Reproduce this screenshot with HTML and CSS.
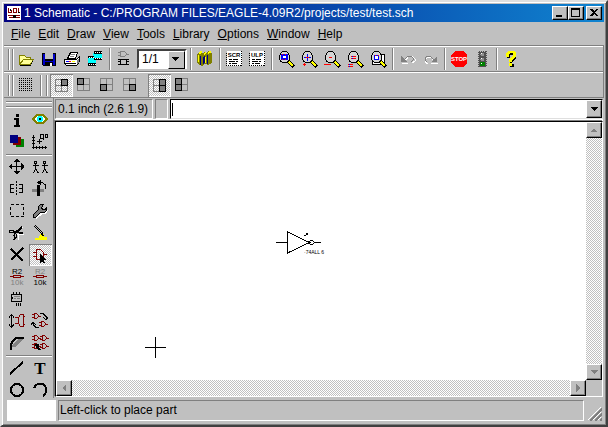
FILE: index.html
```
<!DOCTYPE html>
<html lang="en">
<head>
    <meta charset="UTF-8">
    <meta name="viewport" content="width=device-width, initial-scale=1.0">
    <title>Schematic</title>
    <link rel="stylesheet" href="styles.css">
</head>
<body>
    <svg class="defs" width="0" height="0" aria-hidden="true">
        <defs>
            <g id="lens">
                <path d="M12 12l6 6" stroke="#000" stroke-width="4"/>
                <path d="M13 13l4 4" stroke="#ff0" stroke-width="2"/>
                <path d="M6 2h5v1h1v1h1v2h1v5h-1v2h-1v1H6v-1H4v-2H3V6h1V4h1V3h1z"/>
                <path d="M6 3h5v1h1v2h1v5h-1v1h-1v1H6v-1H5v-1H4V6h1V4h1z" fill="#d4d4d4"/>
            </g>
            <g id="quad">
                <path d="M3.5 3.5h12v12h-12zM9.5 3.5v12M3.5 9.5h12" fill="none" stroke="#808080"/>
            </g>
            <g id="gate">
                <path d="M2.5.5h2l2 2v1l-2 2h-2zM0 1.5h2M0 4.5h2M7 3.5h2" fill="none" stroke="#800000"/>
            </g>
        </defs>
    </svg>

    <header class="titlebar">
        <svg class="app-icon" width="14" height="14" viewBox="0 0 14 14">
            <path fill="#fff" d="M0 0h14v14H0z"/>
            <path fill="none" stroke="#800000" d="M1.5 2v4.5h3V4M6.5 2.5h3v4h-3zM11.5 2v5M1 9.5h12M2 11.5h5M9 11.5h4"/>
            <path fill="#000" d="M3 3h1v2H3zM11 6h2v1h-2zM6 9h3v3H6z"/>
        </svg>
        <h1>1 Schematic - C:/PROGRAM FILES/EAGLE-4.09R2/projects/test/test.sch</h1>
        <div class="window-buttons">
            <button aria-label="Minimize"><svg width="12" height="10"><path d="M2 7h6v2H2z"/></svg></button>
            <button aria-label="Maximize"><svg width="12" height="10"><path fill-rule="evenodd" d="M1 0h9v9H1zM2 2v6h7V2z"/></svg></button>
            <button class="close" aria-label="Close"><svg width="12" height="10"><path d="M2 1h2l2 2 2-2h2L7 4.5 10 8H8L6 6 4 8H2l3-3.5z"/></svg></button>
        </div>
    </header>

    <nav class="menubar">
        <button><u>F</u>ile</button>
        <button><u>E</u>dit</button>
        <button><u>D</u>raw</button>
        <button><u>V</u>iew</button>
        <button><u>T</u>ools</button>
        <button><u>L</u>ibrary</button>
        <button><u>O</u>ptions</button>
        <button><u>W</u>indow</button>
        <button><u>H</u>elp</button>
    </nav>

    <div class="toolbar">
        <span class="handle"></span>
        <button class="tool" aria-label="Open"><svg viewBox="0 0 21 21">
            <path fill="#ff9" stroke="#808000" d="M3.5 15.5v-9h5l2 2h4v7z"/>
            <path fill="#ff9" stroke="#808000" d="M3.5 15.5l4-5h10l-3 5z"/>
            <path fill="none" stroke="#000" d="M4 16.5h11M15.5 15v-1M16.5 13v-1"/>
        </svg></button>
        <button class="tool" aria-label="Save"><svg viewBox="0 0 21 21">
            <path d="M3 4h14v13H4l-1-1z"/>
            <path fill="#0000c8" d="M4 5h2v7h8V5h2v11h-2v-3H6v3H4z"/>
            <path fill="#c0c0c0" d="M6 4h8v6H6z"/>
            <path fill="#fff" d="M11 14h2v3h-2z"/>
        </svg></button>
        <button class="tool" aria-label="Print"><svg viewBox="0 0 21 21">
            <path fill="#fff" stroke="#000" d="M5.5 9.5l3-6h7l-2 6z"/>
            <path stroke="#808080" d="M8 5.5h5M8 7.5h4"/>
            <path fill="#fff" stroke="#000" d="M2.5 10.5h12l3-3v5l-3 4h-10l-2-2z"/>
            <path fill="#808080" d="M15 11l2-2v4l-2 2z"/>
            <path stroke="#000" d="M3 14.5h11"/>
            <path fill="#00f" d="M4 12h3v1H4z"/><path fill="#f00" d="M7 12h2v1H7z"/><path fill="#ff0" d="M10 12h3v1h-3z"/>
        </svg></button>
        <button class="tool" aria-label="Board"><svg viewBox="0 0 21 21">
            <path fill="#0ff" d="M8 4h9v7h-6v4H3V8h5z"/>
            <path d="M9 2h8v3H9zM9 9h8v2H9zM3 7h6v2H3zM3 14h8v3H3z"/>
            <path stroke="#fff" stroke-dasharray="1 1" d="M10 3.5h7M10 9.5h7M4 8.5h5M4 15.5h7"/>
        </svg></button>
        <span class="separator"></span>
        <button class="tool" aria-label="Use library"><svg viewBox="0 0 21 21">
            <path fill="none" stroke="#808080" d="M6.5 2.5h4l2 2v1l-2 2h-4zM4 3.5h2M4 6.5h2M13 5.5h2"/>
            <path fill="none" stroke="#000" d="M6.5 10.5h6v5h-6zM4 10.5h2M4 12.5h2M4 15.5h2M13 10.5h2M13 12.5h2M13 15.5h2"/>
        </svg></button>
        <span class="sheet"><select aria-label="Sheet"><option>1/1</option></select></span>
        <span class="separator"></span>
        <button class="tool" aria-label="Libraries"><svg viewBox="0 0 21 21">
            <path fill="#808000" d="M2 5l4-2 2 1 2-1 1 1 3-2 3 2v10l-4 2-3-1-3 2-3-1-2-2z"/>
            <path fill="#ff0" d="M3 4l3-2 2 1-3 2zM8 5l3-2v2L9 6zM12 4l3-2 2 1-4 2z"/>
            <path fill="none" stroke="#000080" d="M5.5 7v9M8.5 8v7M9.5 7v7M12.5 6v9"/>
            <path fill="none" stroke="#ff0" d="M3.5 6v7M10.5 8v6"/>
        </svg></button>
        <span class="separator"></span>
        <button class="tool" aria-label="Run script"><svg viewBox="0 0 21 21">
            <path fill="#fff" stroke="#000" stroke-dasharray="1 1" d="M2.5 2.5h15v14h-15z"/>
            <path fill="#fff" d="M3 2h14v7H3z"/>
            <text x="10" y="8" font-size="6" text-anchor="middle">SCR</text>
            <path stroke="#000" d="M5 10.5h3M9 10.5h5M5 12.5h6M12 12.5h2M5 14.5h2M8 14.5h5"/>
        </svg></button>
        <button class="tool" aria-label="Run ULP"><svg viewBox="0 0 21 21">
            <path fill="#fff" stroke="#000" stroke-dasharray="1 1" d="M2.5 2.5h15v14h-15z"/>
            <path fill="#fff" d="M3 2h14v7H3z"/>
            <text x="10" y="8" font-size="6" text-anchor="middle">ULP</text>
            <path stroke="#000" d="M5 10.5h3M9 10.5h5M5 12.5h6M12 12.5h2M5 14.5h2M8 14.5h5"/>
        </svg></button>
        <span class="separator"></span>
        <button class="tool" aria-label="Zoom to fit"><svg viewBox="0 0 21 21">
            <use href="#lens"/>
            <path fill="#fff" stroke="#00f" stroke-width="2" d="M6 6h5v4H6z"/><path stroke="#f00" stroke-dasharray="1 2" d="M6 5.5h6M6 10.5h6"/>
        </svg></button>
        <button class="tool" aria-label="Zoom in"><svg viewBox="0 0 21 21">
            <use href="#lens"/>
            <path stroke="#00f" d="M5 8.5h7M8.5 5v7"/><path stroke="#f00" d="M7 8.5h3M4 15.5h3M5.5 14v3"/>
        </svg></button>
        <button class="tool" aria-label="Zoom out"><svg viewBox="0 0 21 21">
            <use href="#lens"/>
            <path stroke="#f00" d="M7 8.5h3M2 15.5h7"/>
        </svg></button>
        <button class="tool" aria-label="Redraw"><svg viewBox="0 0 21 21">
            <use href="#lens"/>
            <path stroke="#f00" d="M6 7.5h5M6 9.5h5M3 15.5h5M3 17.5h5"/><path stroke="#00f" stroke-dasharray="1 3" d="M7 7.5h4M7 9.5h4M4 15.5h4M4 17.5h4"/>
        </svg></button>
        <button class="tool" aria-label="Zoom select"><svg viewBox="0 0 21 21">
            <path fill="#fff" stroke="#000" d="M4.5 5.5h12v10h-12z"/>
            <use href="#lens"/>
            <path fill="#fff" stroke="#00f" d="M6.5 6.5h4v4h-4z"/><path stroke="#f00" stroke-dasharray="1 2" d="M7 6.5h4"/>
        </svg></button>
        <span class="separator"></span>
        <button class="tool" aria-label="Undo"><svg viewBox="0 0 21 21">
            <path fill="none" stroke="#fff" d="M7 13l5-6h3l3 3v2l-3 2M5 14.5h6"/>
            <path fill="none" stroke="#808080" d="M6 12l5-5h3l2 2v2l-2 2"/><path fill="#808080" d="M4 7v6h6z"/>
        </svg></button>
        <button class="tool" aria-label="Redo"><svg viewBox="0 0 21 21">
            <path fill="none" stroke="#fff" d="M15 13l-4-5H8l-3 3v2l3 2M11 14.5h7"/>
            <path fill="none" stroke="#808080" d="M15 12l-5-5H7L5 9v2l2 2"/><path fill="#808080" d="M17 7v6h-6z"/>
        </svg></button>
        <span class="separator"></span>
        <button class="tool" aria-label="Stop"><svg viewBox="0 0 21 21">
            <path fill="#f00" d="M7 2h7l4 4v8l-4 4H7l-5-4V6z"/>
            <text class="stop" x="10" y="12" font-size="6" text-anchor="middle">STOP</text>
        </svg></button>
        <button class="tool" aria-label="Go"><svg viewBox="0 0 21 21">
            <path fill="#505050" d="M6 2h9v16H6z"/>
            <path stroke="#c0c0c0" stroke-dasharray="1 1" d="M6.5 2v16M14.5 3v15M8 2.5h6"/>
            <circle cx="10.5" cy="5.5" r="2" fill="#909090"/><circle cx="10.5" cy="10.5" r="2" fill="#909090"/>
            <circle cx="10.5" cy="15" r="2.5" fill="#008000"/><path fill="#fff" d="M9 4h1v1H9zM9 9h1v1H9zM9 14h1v1H9z"/>
        </svg></button>
        <span class="separator"></span>
        <button class="tool" aria-label="Help"><svg viewBox="0 0 21 21">
            <path d="M7 4h8v5l-4 4v1H9v-2h1l3-3V6H9v3H6V6zM9 15h4v3H9z"/>
            <path fill="#ff0" d="M7 2h6l2 2v4l-4 3v2H8v-3l4-3V5l-1-1H9L8 5v3H5V4zM8 14h3v3H8z"/>
        </svg></button>
    </div>

    <div class="toolbar">
        <span class="handle"></span>
        <button class="tool" aria-label="Grid"><svg viewBox="0 0 21 21">
            <path stroke="#000" stroke-dasharray="1 1" d="M3 3.5h13M3 5.5h13M3 7.5h13M3 9.5h13M3 11.5h13M3 13.5h13M3 15.5h13"/>
        </svg></button>
        <span class="handle handle-wide"></span>
        <button class="tool active" aria-label="Top right" aria-pressed="true"><svg viewBox="0 0 21 21">
            <use href="#quad"/><path fill="#808080" stroke="#000" d="M9.5 3.5h6v6h-6z"/>
        </svg></button>
        <button class="tool" aria-label="Top left"><svg viewBox="0 0 21 21">
            <use href="#quad"/><path fill="#808080" stroke="#000" d="M3.5 3.5h6v6h-6z"/>
        </svg></button>
        <button class="tool" aria-label="Bottom left"><svg viewBox="0 0 21 21">
            <use href="#quad"/><path fill="#808080" stroke="#000" d="M3.5 9.5h6v6h-6z"/>
        </svg></button>
        <button class="tool" aria-label="Bottom right"><svg viewBox="0 0 21 21">
            <use href="#quad"/><path fill="#808080" stroke="#000" d="M9.5 9.5h6v6h-6z"/>
        </svg></button>
        <span class="separator blank"></span>
        <button class="tool active" aria-label="Right side" aria-pressed="true"><svg viewBox="0 0 21 21">
            <use href="#quad"/><path fill="#808080" stroke="#000" d="M9.5 3.5h6v12h-6zM9 9.5h7"/>
        </svg></button>
        <button class="tool" aria-label="Left side"><svg viewBox="0 0 21 21">
            <use href="#quad"/><path fill="#808080" stroke="#000" d="M3.5 3.5h6v12h-6zM3 9.5h7"/>
        </svg></button>
    </div>

    <main class="workspace">
        <aside class="palette">
            <span class="grip"></span>
            <div class="tools">
                <button class="tool" aria-label="Info"><svg viewBox="0 0 21 21">
                    <path d="M9 4h3v3H9zM7 8h5v7h1v2H7v-2h2v-5H7z"/>
                </svg></button>
                <button class="tool" aria-label="Show"><svg viewBox="0 0 21 21">
                    <path fill="#fff" stroke="#808000" stroke-width="2" d="M3 9l4-4h6l4 4-4 4H7z"/>
                    <circle cx="10" cy="9" r="3" fill="#0ff"/><path d="M9 8h2v2H9z"/>
                </svg></button>
                <button class="tool" aria-label="Display"><svg viewBox="0 0 21 21">
                    <path fill="#008000" d="M9 7h8v8H9z"/><path fill="#800000" d="M6 5h8v8H6z"/><path fill="#000080" d="M3 3h8v8H3z"/>
                </svg></button>
                <button class="tool" aria-label="Mark"><svg viewBox="0 0 21 21">
                    <path fill="none" stroke="#000" d="M3.5 3v13.5M2 15.5h15M2 5.5h3M2 8.5h3M2 11.5h3M6.5 14v3M9.5 14v3M12.5 14v3M15.5 14v3M7 9.5h5M9.5 7v5M10.5 3v3h3M10 2.5h3v5M15 2.5h2v3h-2z"/>
                </svg></button>
            </div>
            <hr>
            <div class="tools">
                <button class="tool" aria-label="Move"><svg viewBox="0 0 21 21">
                    <path d="M9 2h1l3 3H6zM9 17h1l3-3H6zM2 9v1l3 3V6zM17 9v1l-3 3V6z"/><path stroke="#000" d="M9.5 4v12M4 9.5h12"/>
                </svg></button>
                <button class="tool" aria-label="Copy"><svg viewBox="0 0 21 21">
                    <path id="man" fill="none" stroke="#000" d="M4.5 4.5h2v2h-2zM3 8.5h6M5.5 7v5M5.5 12l-2 4M5.5 12l3 4"/>
                    <use href="#man" x="9"/>
                </svg></button>
                <button class="tool" aria-label="Mirror"><svg viewBox="0 0 21 21">
                    <path fill="none" stroke="#000" d="M7 5.5H3.5v8H7M4 9.5h3M12 5.5h3.5v8H12M12 9.5h4"/>
                    <path stroke="#000" stroke-dasharray="2 1" d="M9.5 2v15"/>
                </svg></button>
                <button class="tool" aria-label="Rotate"><svg viewBox="0 0 21 21">
                    <path fill="#808080" d="M2 10h12v3H2z"/><path d="M7 6h3v11H7z"/>
                    <path fill="none" stroke="#000" d="M9 3.5h3l3 2 1 4"/><path d="M7 3.5l4-3v6z"/>
                </svg></button>
                <button class="tool" aria-label="Group"><svg viewBox="0 0 21 21">
                    <path fill="none" stroke="#000" stroke-dasharray="3 2" d="M3.5 3.5h13v12h-13z"/>
                </svg></button>
                <button class="tool" aria-label="Change"><svg viewBox="0 0 21 21">
                    <path stroke="#fff" stroke-width="2" fill="none" d="M6 17l6-5h3l2-3"/>
                    <path fill="#808080" stroke="#000" d="M3.5 13.5l5-5v-3l2-2h3l-2 3 1 2h3l1-2v3l-2 2h-4l-5 5h-2z"/>
                </svg></button>
                <button class="tool" aria-label="Cut"><svg viewBox="0 0 21 21">
                    <path fill="none" stroke="#fff" d="M9 11.5h8M11.5 12v5M10 8l6-4"/>
                    <path fill="none" stroke="#000" stroke-width="2" d="M7 11l8-7M7 9l9 1"/>
                    <path fill="none" stroke="#000" d="M2.5 7.5h4v2h-4zM5.5 12.5h2v4h-2M9.5 11v3l-2 2"/>
                </svg></button>
                <button class="tool" aria-label="Paste"><svg viewBox="0 0 21 21">
                    <path stroke="#000" stroke-width="2" d="M5 3l8 8"/><path stroke="#c0c0c0" d="M5 3l7 7"/>
                    <path fill="#ff0" d="M10 11h4v3h3v3H5v-2h4z"/><path d="M11 10h2l1 3h-2z"/>
                </svg></button>
                <button class="tool" aria-label="Delete"><svg viewBox="0 0 21 21">
                    <path stroke="#000" stroke-width="2" d="M4 4l12 12M16 3L4 15"/>
                </svg></button>
                <button class="tool active" aria-label="Add" aria-pressed="true"><svg viewBox="0 0 21 21">
                    <path fill="none" stroke="#800000" d="M6.5 4.5h4l3 3v4l-3 3h-4zM3 7.5h3M3 11.5h3M13 9.5h4"/>
                    <path d="M10 9l6 6h-2l1 3h-2l-1-2-2 2z"/>
                </svg></button>
                <button class="tool" aria-label="Name"><svg viewBox="0 0 21 21">
                    <text class="light" x="10" y="7" font-size="8" text-anchor="middle">R2</text>
                    <text class="light dim" x="10" y="18" font-size="8" text-anchor="middle">10k</text>
                    <path fill="none" stroke="#800000" d="M6.5 8.5h7v2h-7zM3 9.5h3M14 9.5h3"/>
                </svg></button>
                <button class="tool" aria-label="Value"><svg viewBox="0 0 21 21">
                    <text class="light dim" x="10" y="7" font-size="8" text-anchor="middle">R2</text>
                    <text class="light" x="10" y="18" font-size="8" text-anchor="middle">10k</text>
                    <path fill="none" stroke="#800000" d="M6.5 8.5h7v2h-7zM3 9.5h3M14 9.5h3"/>
                </svg></button>
                <button class="tool" aria-label="Smash"><svg viewBox="0 0 21 21">
                    <path fill="none" stroke="#000" d="M4.5 5.5h10v7h-10v-3h1v-1h-1zM6.5 3v2M9.5 3v2M12.5 3v2M9.5 14v3M11.5 14v3M13.5 14v3"/>
                    <path fill="none" stroke="#808080" d="M7 7.5h6M7 9.5h2M10 9.5h3"/>
                </svg></button>
            </div>
            <div class="tools">
                <button class="tool" aria-label="Pinswap"><svg viewBox="0 0 21 21">
                    <path fill="none" stroke="#000" d="M4.5 4v12M2 6.5l2.5-3L7 6.5M2 13.5l2.5 3 2.5-3"/>
                    <path fill="none" stroke="#800000" d="M16.5 3.5h-3l-2 3v6l2 3h3zM8 6.5h3M8 12.5h3M17 5.5h1M17 13.5h1"/>
                </svg></button>
                <button class="tool" aria-label="Gateswap"><svg viewBox="0 0 21 21">
                    <use href="#gate" x="2" y="2"/><use href="#gate" x="9" y="10"/>
                    <path fill="none" stroke="#000" d="M10 2.5h3l3 3v3M13 6.5l3 2 2-2M3.5 12v2l2 2h3M1 13.5l2-2 3 2"/>
                </svg></button>
                <button class="tool" aria-label="Split"><svg viewBox="0 0 21 21">
                    <path fill="#808080" d="M5 14v-2l8-7h3v2l-8 7z"/>
                    <path d="M3 17v-6l3-5 2-2h9v2H9l-2 2-2 4v5z"/>
                </svg></button>
                <button class="tool" aria-label="Invoke"><svg viewBox="0 0 21 21">
                    <use href="#gate" x="2" y="2"/><use href="#gate" x="10" y="2"/><use href="#gate" x="2" y="10"/><use href="#gate" x="10" y="10"/>
                    <path d="M5 11h4v3l2 3H9l-3-2z"/>
                </svg></button>
            </div>
            <hr>
            <div class="tools">
                <button class="tool" aria-label="Wire"><svg viewBox="0 0 21 21"><path stroke="#000" stroke-width="2" d="M3 16L16 4"/></svg></button>
                <button class="tool" aria-label="Text"><svg viewBox="0 0 21 21"><text class="serif" x="10" y="16" font-size="17" text-anchor="middle">T</text></svg></button>
                <button class="tool" aria-label="Circle"><svg viewBox="0 0 21 21"><circle cx="10" cy="10" r="6" fill="none" stroke="#000" stroke-width="2"/></svg></button>
                <button class="tool" aria-label="Arc"><svg viewBox="0 0 21 21"><path fill="none" stroke="#000" stroke-width="2" d="M4 8c2-5 8-6 11-2s1 8-2 10"/></svg></button>
            </div>
        </aside>

        <section class="editor">
            <div class="command-row">
                <output class="coords">0.1 inch (2.6 1.9)</output>
                <span class="flag"></span>
                <div class="command">
                    <input type="text" aria-label="Command">
                    <button class="arrow" aria-label="History"><svg width="7" height="4"><path d="M0 0h7L4 4H3z"/></svg></button>
                </div>
            </div>
            <div class="view">
                <svg class="sheet-canvas">
                    <path fill="none" stroke="#000" d="M89 225.5h21M99.5 215v21"/>
                    <path fill="none" stroke="#000" d="M220 120.5h11M231.5 110v21l22-10.5zM258 120.5h7"/>
                    <path d="M254 118h3v1h1v1h-1v-1h-3zM253 119h1v3h-1zM254 122h3v1h-3zM257 121h1v1h-1z"/>
                    <path d="M250 111h2v2h-2zM248 113h2v1h-2z"/>
                    <text x="248" y="132" font-size="5">·74ALL 6</text>
                </svg>
                <div class="scroll vertical">
                    <button class="arrow" aria-label="Scroll up"><svg width="8" height="4"><path d="M4 0L0 4h7z"/></svg></button>
                    <button class="arrow" aria-label="Scroll down"><svg width="8" height="4"><path d="M0 0h8L4 4z"/></svg></button>
                </div>
                <div class="scroll horizontal">
                    <button class="arrow" aria-label="Scroll left"><svg width="4" height="8"><path d="M4 0v8L0 4z"/></svg></button>
                    <button class="arrow" aria-label="Scroll right"><svg width="4" height="8"><path d="M0 0v8l4-4z"/></svg></button>
                </div>
            </div>
        </section>
    </main>

    <footer class="statusbar">
        <span class="status-swatch"></span>
        <span class="status-text">Left-click to place part</span>
        <svg class="size-grip" width="14" height="14" viewBox="0 0 14 14">
            <path stroke="#fff" d="M0 13L13 0M5 13l8-8M10 13l3-3"/>
            <path stroke="#808080" stroke-width="2" d="M2 14L14 2M7 14l7-7M12 14l2-2"/>
        </svg>
    </footer>
</body>
</html>
```
FILE: styles.css
```
* {
    box-sizing: border-box;
}
body {
    display: flex;
    flex-direction: column;
    height: 100vh;
    margin: 0;
    padding: 2px;
    overflow: hidden;
    background: #c0c0c0;
    border: 2px solid;
    border-color: #dfdfdf #404040 #404040 #dfdfdf;
    box-shadow: inset 1px 1px #fff, inset -1px -1px #808080;
    font: 12px/16px "Liberation Sans", Arial, sans-serif;
    color: #000;
}
button, input, select {
    margin: 0;
    padding: 0;
    border: 0;
    border-radius: 0;
    background: none;
    font: inherit;
    color: inherit;
}
svg {
    display: block;
    flex: none;
    shape-rendering: crispEdges;
}
svg text {
    font-family: "Liberation Sans", sans-serif;
    font-weight: bold;
}
svg .serif {
    font-family: "Liberation Serif", serif;
}
svg .light {
    font-weight: normal;
}
svg .dim {
    fill: #808080;
}
svg .stop {
    fill: #fff;
}
.defs {
    position: absolute;
}

/* title and menu */
.titlebar {
    display: flex;
    align-items: center;
    flex: none;
    height: 18px;
    padding: 0 2px 0 3px;
    background: linear-gradient(to right, #000080, #1084d0);
    color: #fff;
}
.titlebar h1 {
    flex: 1;
    margin: 0 0 0 3px;
    font-size: 12px;
    font-weight: normal;
    white-space: nowrap;
    overflow: hidden;
}
.window-buttons {
    display: flex;
}
.window-buttons button {
    display: flex;
    justify-content: center;
    align-items: center;
    width: 16px;
    height: 14px;
}
.window-buttons .close {
    margin-left: 2px;
}
.window-buttons button, .arrow {
    background: #c0c0c0;
    border: 1px solid;
    border-color: #fff #000 #000 #fff;
    box-shadow: inset -1px -1px #808080;
}
.menubar {
    display: flex;
    flex: none;
    align-items: center;
    gap: 8px;
    height: 23px;
    padding-left: 7px;
}
.menubar u {
    text-underline-offset: 1px;
}

/* toolbars */
.toolbar {
    display: flex;
    flex: none;
    height: 26px;
    padding: 1px 0 0 4px;
    border-top: 1px solid #808080;
    border-right: 1px solid #808080;
    box-shadow: inset 0 1px #fff;
    align-items: center;
}
.handle {
    width: 5px;
    height: 21px;
    margin-right: 2px;
    border: solid #808080;
    border-width: 0 1px;
    box-shadow: inset 1px 0 #fff, 1px 0 #fff;
}
.handle-wide {
    width: 7px;
    margin: 0 3px 0 2px;
}
.separator {
    width: 6px;
    height: 22px;
    background: linear-gradient(to right, #808080 50%, #fff 50%) center / 2px 100% no-repeat;
}
.separator.blank {
    background: none;
}
.tool {
    width: 23px;
    height: 23px;
    padding: 1px;
}
.tool svg {
    width: 21px;
    height: 21px;
}
.tool.active, .scroll {
    background: repeating-conic-gradient(#fff 0 25%, #c0c0c0 0 50%) 0 0 / 2px 2px;
}
.tool.active {
    box-shadow: inset 1px 1px #808080, inset -1px -1px #fff;
}
.toolbar .tool.active {
    padding: 2px 0 0 2px;
}
.sheet {
    position: relative;
    width: 50px;
    height: 20px;
    margin: 0 1px;
    border: 2px solid;
    border-color: #404040 #fff #fff #404040;
    background: #fff;
}
.sheet::after {
    content: "";
    position: absolute;
    top: 0;
    right: 0;
    width: 15px;
    height: 16px;
    background: linear-gradient(#000, #000) 3px 5px / 7px 1px no-repeat,
        linear-gradient(#000, #000) 4px 6px / 5px 1px no-repeat,
        linear-gradient(#000, #000) 5px 7px / 3px 1px no-repeat,
        linear-gradient(#000, #000) 6px 8px / 1px 1px no-repeat #c0c0c0;
    border: 1px solid;
    border-color: #fff #000 #000 #fff;
    pointer-events: none;
}
.sheet select {
    display: block;
    width: 100%;
    height: 16px;
    padding-left: 3px;
    appearance: none;
    line-height: 16px;
}

/* left palette */
.workspace {
    display: flex;
    flex: 1;
    min-height: 0;
    border-top: 1px solid #808080;
}
.palette {
    width: 50px;
    flex: none;
    padding: 3px 1px 0 2px;
    overflow: hidden;
    border-right: 1px solid #808080;
}
.grip {
    display: block;
    height: 6px;
    margin-bottom: 2px;
    border: solid #808080;
    border-width: 1px 0;
    box-shadow: inset 0 1px #fff, 0 1px #fff;
}
.tools {
    display: grid;
    grid-template-columns: 23px 23px;
}
.tools .tool {
    height: 22px;
}
.palette hr {
    height: 3px;
    margin: 0;
    border: 0;
    background: linear-gradient(#808080 50%, #fff 50%) center / 100% 2px no-repeat;
}

/* command line and drawing area */
.editor {
    display: flex;
    flex: 1;
    flex-direction: column;
    min-width: 0;
    padding: 0 1px;
}
.command-row {
    display: flex;
    gap: 2px;
    height: 23px;
    padding-top: 1px;
}
.coords, .flag {
    height: 20px;
    border: 1px solid;
    border-color: #808080 #fff #fff #808080;
}
.coords {
    width: 98px;
    padding-left: 2px;
    line-height: 18px;
    white-space: nowrap;
}
.flag {
    width: 13px;
}
.command {
    display: flex;
    flex: 1;
    min-width: 0;
    height: 20px;
    border: 1px solid;
    border-color: #000 #dfdfdf #dfdfdf #000;
    background: #fff;
}
.command input {
    flex: 1;
    min-width: 0;
    padding-left: 3px;
    outline: none;
    background: linear-gradient(#000, #000) 1px 3px / 1px 13px no-repeat;
}
.arrow {
    display: flex;
    justify-content: center;
    align-items: center;
    width: 16px;
    height: 16px;
}
.command .arrow {
    height: 18px;
}
.view {
    display: grid;
    flex: 1;
    min-height: 0;
    grid-template-columns: 1fr 16px;
    grid-template-rows: 1fr 16px;
    margin-bottom: 1px;
    border: 1px solid;
    border-color: #000 #fff #fff #000;
    box-shadow: -1px -1px #808080, 0 -2px #fff;
}
.sheet-canvas {
    width: 100%;
    height: 100%;
    min-height: 0;
    background: #fff;
}
.sheet-canvas text {
    font-weight: normal;
}
.scroll {
    display: flex;
    justify-content: space-between;
}
.vertical {
    flex-direction: column;
}
.scroll .arrow path {
    fill: #808080;
}

/* status */
.statusbar {
    display: flex;
    flex: none;
    gap: 2px;
    height: 25px;
    padding: 2px 2px 2px 3px;
}
.status-swatch {
    width: 49px;
    background: #fff;
}
.status-text {
    flex: 1;
    padding-left: 1px;
    line-height: 18px;
    border: 1px solid;
    border-color: #808080 #fff #fff #808080;
}
.size-grip {
    align-self: flex-end;
    margin-left: 2px;
}
```
